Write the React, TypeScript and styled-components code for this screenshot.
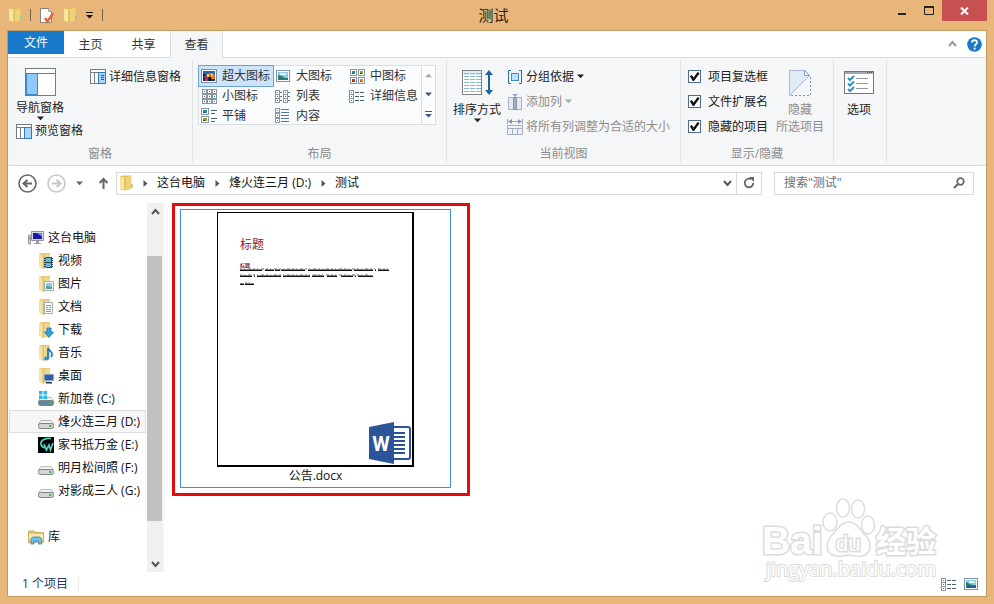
import React, { useState } from "react";
import styled, { createGlobalStyle, css } from "styled-components";

const Global = createGlobalStyle`
  *, *::before, *::after { box-sizing: border-box; }
  body { margin: 0; }
  body, button, input {
    font-family: "Open Sans", "Noto Sans CJK SC", sans-serif;
    font-size: 12px;
    line-height: 16px;
    color: #222;
  }
  button { border: 0; padding: 0; background: none; white-space: nowrap; }
  svg { display: block; flex: none; }
`;

const Window = styled.div`
  min-height: 100vh;
  display: flex;
  flex-direction: column;
  background: #e8b679;
`;

/* ---------- title bar ---------- */
const TitleBar = styled.header`
  display: grid;
  grid-template-columns: 1fr auto 1fr;
  height: 30px;
  padding-right: 7px;
`;
const QuickAccess = styled.div`
  display: flex;
  align-items: center;
  gap: 8px;
  padding-left: 8px;
`;
const QuickButton = styled.button`
  display: flex;
`;
const QuickDivider = styled.span`
  width: 1px;
  height: 12px;
  background: #76604a;
`;
const Title = styled.h1`
  margin: 0;
  font-size: 15px;
  font-weight: 400;
  line-height: 30px;
  color: #2b2116;
`;
const WindowButtons = styled.div`
  display: flex;
  justify-content: flex-end;
  align-items: flex-start;
`;
const WindowButton = styled.button<{ $close?: boolean }>`
  display: flex;
  align-items: center;
  justify-content: center;
  width: ${(p) => (p.$close ? 45 : 27)}px;
  height: 21px;
  background: ${(p) => (p.$close ? "#c75050" : "transparent")};
`;

/* ---------- client area ---------- */
const Client = styled.div`
  position: relative;
  flex: 1;
  display: flex;
  flex-direction: column;
  margin: 0 7px 7px;
  border: 1px solid #c49a63;
  background: #fff;
`;
const TabStrip = styled.nav`
  display: flex;
  height: 27px;
  border-bottom: 1px solid #dadbdc;
`;
const FileTab = styled.button`
  width: 56px;
  height: 23px;
  color: #fff;
  background: #1979ca;
`;
const Tab = styled.button<{ $active?: boolean }>`
  width: 53px;
  height: 27px;
  color: #333;
  ${(p) =>
    p.$active &&
    css`
      border: 1px solid #dadbdc;
      border-width: 0 1px;
      background: #f5f6f7;
    `}
`;
const TabTools = styled.div`
  display: flex;
  align-items: center;
  gap: 10px;
  margin-left: auto;
  padding-right: 4px;
`;
const IconButton = styled.button`
  display: flex;
  align-items: center;
  justify-content: center;
`;

/* ---------- ribbon ---------- */
const Ribbon = styled.div`
  display: flex;
  height: 108px;
  padding: 2px 0 3px;
  background: #f5f6f7;
  border-bottom: 1px solid #dadbdc;
`;
const Group = styled.section<{ $width: number }>`
  display: flex;
  flex-direction: column;
  width: ${(p) => p.$width}px;
  flex: none;
  border-right: 1px solid #e2e3e4;
`;
const GroupBody = styled.div<{ $inset?: number; $gap?: number }>`
  flex: 1;
  display: flex;
  align-items: flex-start;
  gap: ${(p) => p.$gap ?? 0}px;
  padding: 4px 0 0 ${(p) => p.$inset ?? 8}px;
`;
const GroupLabel = styled.h2`
  margin: 0;
  height: 16px;
  font-size: 12px;
  font-weight: 400;
  line-height: 16px;
  text-align: center;
  color: #8b8b8b;
`;
const Stack = styled.div<{ $gap?: number }>`
  display: flex;
  flex-direction: column;
  align-items: flex-start;
  gap: ${(p) => p.$gap ?? 0}px;
`;
const BigButton = styled.button`
  display: flex;
  flex-direction: column;
  align-items: center;
  line-height: 15px;
  color: #222;
  &:disabled { color: #8d8d8d; }
`;
const TwoLines = styled.span`
  display: flex;
  flex-direction: column;
  align-items: center;
  gap: 2px;
`;
const BigIcon = styled.span`
  display: flex;
  align-items: center;
  height: 38px;
`;
const SmallButton = styled.button<{ $tall?: boolean }>`
  display: flex;
  align-items: center;
  gap: 3px;
  height: ${(p) => (p.$tall ? 25 : 18)}px;
  color: #222;
  &:disabled { color: #8d8d8d; }
`;
const Gallery = styled.div`
  display: flex;
  height: 60px;
  margin-top: 1px;
  border: 1px solid #dcdde0;
  background: #fbfcfd;
`;
const GalleryItems = styled.div`
  display: grid;
  grid-template-columns: repeat(3, 74px);
  grid-auto-rows: 20px;
  height: 58px;
`;
const GalleryItem = styled.button<{ $selected?: boolean }>`
  display: flex;
  align-items: center;
  gap: 5px;
  padding-left: 2px;
  color: #333;
  ${(p) =>
    p.$selected &&
    css`
      background: #cde3fb;
      outline: 1px solid #6ba3d8;
      outline-offset: 0;
    `}
`;
const GalleryScroll = styled.div`
  display: grid;
  grid-template-rows: repeat(3, 1fr);
  width: 14px;
  border-left: 1px solid #dcdde0;
`;
const CheckLabel = styled.label`
  display: flex;
  align-items: center;
  gap: 7px;
  height: 25px;
  white-space: nowrap;
`;
const CheckBox = styled.input`
  appearance: none;
  width: 13px;
  height: 13px;
  margin: 0;
  border: 1px solid #4d6b93;
  background: #fff;
  &:checked::before {
    content: "";
    display: block;
    width: 11px;
    height: 11px;
    background: #111;
    clip-path: polygon(8% 48%, 26% 36%, 42% 58%, 78% 10%, 96% 20%, 46% 92%, 34% 92%);
  }
`;

/* ---------- address row ---------- */
const AddressRow = styled.div`
  display: flex;
  align-items: center;
  height: 37px;
  padding: 0 12px 3px 10px;
`;
const NavButtons = styled.div`
  display: flex;
  align-items: center;
  gap: 10px;
  width: 98px;
  padding-right: 7px;
  & > :last-child { margin-left: auto; }
`;
const AddressBox = styled.div`
  flex: 1;
  display: flex;
  height: 23px;
  border: 1px solid #d9d9d9;
`;
const Crumbs = styled.div`
  flex: 1;
  display: flex;
  align-items: center;
  padding-left: 2px;
`;
const Crumb = styled.a`
  color: #111;
  text-decoration: none;
  white-space: nowrap;
`;
const CrumbArrow = styled.span`
  width: 24px;
  display: flex;
  justify-content: center;
`;
const BoxButton = styled.button<{ $divided?: boolean }>`
  display: flex;
  align-items: center;
  justify-content: center;
  width: ${(p) => (p.$divided ? 25 : 18)}px;
  border-left: ${(p) => (p.$divided ? "1px solid #d9d9d9" : "0")};
`;
const SearchBox = styled.form`
  display: flex;
  width: 200px;
  height: 23px;
  margin-left: 12px;
  padding: 0 8px;
  border: 1px solid #d9d9d9;
`;
const SearchInput = styled.input`
  flex: 1;
  min-width: 0;
  border: 0;
  padding: 0 0 0 1px;
  outline: none;
  background: transparent;
  &::placeholder { color: #6d6d6d; opacity: 1; }
`;

/* ---------- body ---------- */
const Body = styled.div`
  flex: 1;
  display: flex;
`;
const NavPane = styled.aside`
  width: 139px;
  flex: none;
  padding: 23px 1px 0;
`;
const NavList = styled.ul`
  list-style: none;
  margin: 0;
  padding: 0 0 23px;
`;
const NavItem = styled.a<{ $root?: boolean; $current?: boolean }>`
  display: flex;
  align-items: center;
  gap: 4px;
  height: 23px;
  padding-left: ${(p) => (p.$root ? 19 : 29)}px;
  color: #111;
  text-decoration: none;
  white-space: nowrap;
  ${(p) =>
    p.$current &&
    css`
      background: #f7f7f7;
      box-shadow: inset 0 0 0 1px #dedede;
    `}
`;
const ScrollBar = styled.div`
  display: flex;
  flex-direction: column;
  width: 16px;
  flex: none;
  background: #f0f0f0;
`;
const ScrollButton = styled.button`
  display: flex;
  align-items: center;
  justify-content: center;
  height: 17px;
`;
const ScrollTrack = styled.div`
  flex: 1;
  display: grid;
  grid-template-rows: 36fr 265fr 34fr;
`;
const ScrollThumb = styled.div`
  grid-row: 2;
  width: 15px;
  background: #c1c1c1;
`;
const Files = styled.main`
  flex: 1;
  padding-left: 8px;
  border-left: 1px solid #f6f6f6;
`;
const Highlight = styled.div`
  width: 298px;
  height: 293px;
  padding: 3px 16px 5px 5px;
  border: 3px solid #e30b0b;
`;
const FileTile = styled.button`
  display: flex;
  flex-direction: column;
  align-items: center;
  gap: 1px;
  width: 100%;
  height: 279px;
  padding-top: 2px;
  border: 1px solid #3f8ddb;
  color: #111;
`;
const Page = styled.span`
  position: relative;
  display: block;
  width: 197px;
  height: 255px;
  padding: 24px 0 0 22px;
  border: 1px solid #000;
  border-width: 1px 2px 2px 1px;
  background: #fff;
  text-align: left;
  color: #8a2030;
`;
const PageHeading = styled.span<{ $small?: boolean }>`
  display: block;
  height: ${(p) => (p.$small ? 6 : 25)}px;
  font-size: ${(p) => (p.$small ? 5 : 12)}px;
  font-weight: ${(p) => (p.$small ? 700 : 400)};
  line-height: ${(p) => (p.$small ? 6 : 16)}px;
`;
const Badge = styled.span`
  position: absolute;
  right: 1px;
  bottom: 1px;
`;
const StatusBar = styled.footer`
  display: flex;
  align-items: center;
  height: 24px;
  padding: 0 8px 0 14px;
  color: #2a3a5c;
`;
const StatusCount = styled.span`
  padding-right: 10px;
  border-right: 1px solid #ececec;
`;
const StatusTools = styled.div`
  display: flex;
  gap: 7px;
  margin-left: auto;
`;
const Watermark = styled.svg`
  position: absolute;
  right: 40px;
  bottom: 12px;
  pointer-events: none;
`;

/* ---------- icons ---------- */
const Caret = ({ color = "#222", dir = "down" }: { color?: string; dir?: "down" | "up" | "right" }) => (
  <svg width="7" height="7" viewBox="0 0 7 7">
    <path fill={color} d={dir === "down" ? "M0 1.500h7L3.500 5.200z" : dir === "up" ? "M0 5.200h7L3.500 1.500z" : "M1.500 0v7L5.500 3.500z"} />
  </svg>
);
const Chevron = ({ up, color = "#555" }: { up?: boolean; color?: string }) => (
  <svg width="9" height="8" viewBox="0 0 9 8">
    <path fill="none" stroke={color} strokeWidth="2" d={up ? "M1 6l3.500-4L8 6" : "M1 2l3.500 4L8 2"} />
  </svg>
);
const FolderShape = () => (
  <>
    <path fill="#e3bd55" d="M1 1.500l2-1h9v13l-3 1.500H3l-2-1z" />
    <path fill="#f7e69b" d="M1 1.500l5 1v13l-5-2z" />
    <path fill="#eed477" d="M6 2.500L12.500 1v12.500L6 15.500z" />
    <path fill="#d2ab46" d="M5.500 2.500h1v13h-1z" />
  </>
);
const Folder = () => (
  <svg width="14" height="16" viewBox="0 0 14 16">
    <FolderShape />
    <path fill="#8fc6a0" d="M12 9h1.500v4H12z" />
  </svg>
);
const Properties = () => (
  <svg width="16" height="17" viewBox="0 0 16 17">
    <path fill="#fff" stroke="#8a8178" d="M1.500 1.500h8l3 3v11h-11z" />
    <path fill="#ddd" stroke="#8a8178" strokeWidth=".7" d="M9.500 1.500v3h3" />
    <path fill="none" stroke="#e0673a" strokeWidth="2.600" d="M6 11l2.500 3.500L14 6.500" />
  </svg>
);
const Pane = ({ w, h, kind }: { w: number; h: number; kind: "nav" | "preview" | "details" }) => {
  const top = kind === "nav" ? 5 : 3;
  return (
    <svg width={w} height={h} viewBox={`0 0 ${w} ${h}`} shapeRendering="crispEdges">
      <rect x=".5" y=".5" width={w - 1} height={h - 1} fill="#fff" stroke="#777c82" />
      <path stroke="#777c82" d={`M1 ${top + 0.5}h${w - 2}`} />
      {kind === "nav" ? (
        <rect x="1.500" y="5.500" width="11" height={h - 7} fill="#91c8fb" stroke="#3b86c8" />
      ) : (
        <>
          <path stroke="#777c82" d={`M4.500 ${top}v${h - top}`} />
          <rect x="8.500" y="3.500" width="7" height={h - 4} fill="#a9d4fb" stroke="#2d7cc0" />
          {kind === "details" && <path stroke="#23568a" d="M11 6.500h3M11 8.500h3M11 10.500h3" />}
        </>
      )}
    </svg>
  );
};
const Pic = ({ x = 0, y = 0, w = 6, h = 6, a = "#2f8f86", b = "#1e4d7a" }: any) => (
  <>
    <rect x={x + 0.5} y={y + 0.5} width={w - 1} height={h - 1} fill="#fff" stroke="#8796a6" />
    <rect x={x + 2} y={y + 2} width={w - 4} height={h - 4} fill={a} />
    <rect x={x + 2} y={y + h - 2 - Math.floor((h - 4) / 2)} width={Math.max(1, (w - 4) / 2)} height={Math.floor((h - 4) / 2)} fill={b} />
  </>
);
const Landscape = () => (
  <svg width="14" height="12" viewBox="0 0 14 12">
    <rect x=".5" y=".5" width="13" height="11" fill="#fff" stroke="#7d93ab" />
    <path fill="#8fc9e8" d="M2 2h10v8H2z" />
    <path fill="#e5f4fb" d="M5 3h6v2H5z" />
    <path fill="#2b7d6d" d="M2 4l4 2 3 1h3v3H2z" />
    <path fill="#1e5b94" d="M4 8h8v2H3z" />
  </svg>
);
const ViewIcon = ({ kind }: { kind: string }) => {
  const cols = ["#2f8f86", "#c04444", "#3d62b8"];
  return (
    <svg width="16" height="16" viewBox="0 0 16 16">
      {kind === "xl" && (
        <>
          <rect x=".5" y="1.500" width="15" height="13" fill="#fff" stroke="#7d93ab" />
          <path fill="#2a64b8" d="M2 3h12v10H2z" />
          <path fill="#15315e" d="M2 9h12v4H2z" />
          <path fill="#e8722c" d="M8 5h4l2 3v3H9z" />
          <path fill="#d42a2a" d="M4 8h3v5H4z" />
          <path fill="#f4d04a" d="M6 6h2v3H6zM10 6h2v2h-2z" />
          <path fill="#111" d="M8 9h2v4H8zM2 6h2v2H2z" />
        </>
      )}
      {kind === "l" && (
        <g transform="translate(1 2)">
          <rect x=".5" y=".5" width="13" height="11" fill="#fff" stroke="#7d93ab" />
          <path fill="#8fc9e8" d="M2 2h10v8H2z" />
          <path fill="#e5f4fb" d="M4 3h6v2H4z" />
          <path fill="#2b7d6d" d="M2 5l4 1 3 2h3v2H2z" />
        </g>
      )}
      {kind === "m" && (
        <>
          <Pic x={1} y={1} w={7} h={7} />
          <Pic x={9} y={1} w={7} h={7} a="#8aa12c" b="#222" />
          <Pic x={1} y={9} w={7} h={7} a="#c2392b" b="#25407c" />
          <Pic x={9} y={9} w={7} h={7} a="#e08a2e" b="#7a1c1c" />
        </>
      )}
      {kind === "s" &&
        [0, 1, 2].map((r) => [0, 1, 2].map((c) => <Pic key={r * 3 + c} x={1 + c * 5} y={1 + r * 5} w={5} h={5} a={cols[(r + c) % 3]} b={cols[(r + c) % 3]} />))}
      {kind === "list" &&
        [0, 1, 2].map((r) => (
          <g key={r}>
            <Pic x={0} y={2 + r * 4} w={5} h={5} a={cols[r]} b={cols[r]} />
            <Pic x={8} y={2 + r * 4} w={5} h={5} a={cols[r]} b={cols[r]} />
            <path stroke="#5b7591" d={`M5 ${4.5 + r * 4}h2M13 ${4.5 + r * 4}h2`} />
          </g>
        ))}
      {kind === "details" &&
        [0, 1, 2].map((r) => (
          <g key={r}>
            <Pic x={0} y={2 + r * 4} w={5} h={5} a={cols[r]} b={cols[r]} />
            <path stroke="#4a5f78" d={`M6 ${4.5 + r * 4}h4M11 ${4.5 + r * 4}h4`} />
          </g>
        ))}
      {kind === "tiles" && (
        <>
          <Pic x={0} y={0} w={8} h={7} />
          <Pic x={0} y={8} w={8} h={7} a="#8aa12c" b="#333" />
          <path stroke="#4a5f78" d="M10 2.500h6M10 5.500h4M10 10.500h6M10 13.500h4" />
        </>
      )}
      {kind === "content" && (
        <>
          {[0, 1, 2].map((r) => <Pic key={r} x={0} y={r * 5} w={5} h={5} a={cols[r]} b={cols[r]} />)}
          <path stroke="#4a78a8" d="M6 1.500h8M6 4.500h8M6 7.500h8M6 10.500h8M6 13.500h8" />
        </>
      )}
    </svg>
  );
};
const SortIcon = () => (
  <svg width="32" height="28" viewBox="0 0 32 28">
    <rect x="1.500" y="1.500" width="19" height="24" fill="#fff" stroke="#7d8288" />
    <path fill="#e1f0f8" d="M2 2h18v4H2z" />
    <path stroke="#8cb4c8" strokeDasharray="5 1" d="M3 4.500h17M3 7.500h17M3 10.500h17M3 13.500h17M3 16.500h17M3 19.500h17M3 22.500h17" />
    <path stroke="#1f6497" strokeWidth="2" d="M28 4v19" />
    <path fill="#1f6497" d="M28 1l4 5h-8zM28 26l4-5h-8z" />
  </svg>
);
const GroupIcon = () => (
  <svg width="16" height="16" viewBox="0 0 16 16">
    <path fill="none" stroke="#2a6d9e" d="M4 1.500H1.500v13H4M12 1.500h2.500v13H12" />
    <rect x="4.500" y="4.500" width="7" height="7" fill="#b9e0fa" stroke="#3d8fc9" />
  </svg>
);
const AddColumnIcon = () => (
  <svg width="16" height="16" viewBox="0 0 16 16">
    <path fill="#e6eaf2" stroke="#a5afc4" d="M1.500 3.500h13v12h-13z" />
    <path fill="#a3aec6" stroke="#8894b0" d="M6.500 3.500h3v12h-3z" />
    <path fill="#9aa5bd" d="M5 0h6L8 3z" />
  </svg>
);
const FitColumnsIcon = () => (
  <svg width="16" height="16" viewBox="0 0 16 16">
    <path stroke="#98a5c0" d="M.5 0v5M15.500 0v5M2 2.500h12" />
    <path fill="#8895b5" d="M1 2.500L5 0v5zM15 2.500L11 0v5z" />
    <path fill="#eef1f6" stroke="#a5afc4" d="M.5 6.500h15v9H.5zM.5 9.500h15M5.500 9v6M10.500 9v6" />
  </svg>
);
const HideIcon = () => (
  <svg width="24" height="28" viewBox="0 0 24 28">
    <path fill="#e1eaf7" d="M1 1h16l5 5L1 27z" />
    <path fill="none" stroke="#a9b9d6" d="M1.500 27V1.500h16M1 27L22 6" />
    <path fill="#f6f8fc" stroke="#8c9fc4" d="M16.500 1.500v5h5z" />
    <path fill="none" stroke="#7d90b8" strokeDasharray="2 2" d="M22.500 8v18.500H2" />
  </svg>
);
const OptionsIcon = () => (
  <svg width="30" height="24" viewBox="0 0 30 24">
    <rect x=".5" y=".5" width="29" height="22" fill="#fff" stroke="#777" />
    <path fill="#a4a9ae" d="M1 1h28v2H1z" />
    <path stroke="#555" strokeDasharray="1 1" d="M23 1.500h5" />
    <path fill="none" stroke="#2f94c4" strokeWidth="2" d="M4 7l2 2 4-4M4 12.500l2 2 4-4M4 18l2 2 4-4" />
    <path stroke="#8f9aa4" d="M12 7.500h12M12 12.500h12M12 17.500h12" />
  </svg>
);
const CircleArrow = ({ flip, color }: { flip?: boolean; color: string }) => (
  <svg width="19" height="19" viewBox="0 0 19 19">
    <circle cx="9.500" cy="9.500" r="8.500" fill="none" stroke={color} strokeWidth="1.600" />
    <path fill="none" stroke={color} strokeWidth="2" d={flip ? "M5 9.500h8M9.500 6l4 3.500-4 3.500" : "M14 9.500H6M9.500 6l-4 3.500 4 3.500"} />
  </svg>
);
const NavIcon = ({ kind }: { kind: string }) => (
  <svg width="16" height="16" viewBox="0 0 16 16">
    {["video", "image", "doc", "down", "music", "desk"].includes(kind) && (
      <>
        <path fill="#e7c873" d="M1 1l2-1h9v14l-7 1z" />
        <path fill="#f5e3a2" d="M1 1l4 1v14l-4-2z" />
        <path fill="#efd88c" d="M5 2l7-1v13l-7 2z" />
        <path stroke="#c9a94f" strokeWidth=".8" d="M5.200 2v13.500" />
      </>
    )}
    {kind === "video" && (
      <>
        <path fill="#34454f" d="M6 4h9v11H6z" />
        <path fill="#6db5d8" d="M8 5h5v4H8zM8 10h5v4H8z" />
        <path stroke="#fff" strokeDasharray="1 1" d="M7 4v11M14.500 4v11" />
      </>
    )}
    {kind === "image" && (
      <>
        <path fill="#fff" stroke="#a3adb5" d="M6.500 5.500h9v9h-9z" />
        <path fill="#8fcbe0" d="M8 7h6v6H8z" />
        <path fill="#4e9c92" d="M8 10l6 1v2H8z" />
      </>
    )}
    {kind === "doc" && (
      <>
        <path fill="#fff" stroke="#a3adb5" d="M6.500 3.500h8v11h-8z" />
        <path stroke="#6d9cc8" d="M8 6.500h5M8 8.500h2M11 8.500h2M8 10.500h5M8 12.500h5" />
      </>
    )}
    {kind === "down" && <path fill="#35a0dc" stroke="#1b6ea8" strokeWidth=".8" d="M9 6h4v4h2.500L11 15.500 6.500 10H9z" />}
    {kind === "music" && (
      <>
        <path fill="none" stroke="#2377ad" strokeWidth="1.800" d="M10 13V3c1 3 4 3 4 6 0 2-1 3-1 3" />
        <ellipse cx="8.500" cy="13.500" rx="2.500" ry="2" fill="#2c90c9" />
      </>
    )}
    {kind === "desk" && (
      <>
        <path fill="#2f5fa8" stroke="#8da4c0" d="M6.500 6.500h9v6h-9z" />
        <path fill="#234" d="M8 14h6v1.500H8z" />
      </>
    )}
    {kind === "pc" && (
      <>
        <path fill="#d7d9de" stroke="#8f959c" d="M3.500 1.500h12v9h-12z" />
        <path fill="#1419a8" d="M5 3h9v6H5z" />
        <path fill="#5f86ee" d="M9 3h5v4z" />
        <path fill="#9aa0a6" d="M8 11h3v2h2v1H6v-1h2z" />
        <path fill="#cfd3d6" stroke="#868c90" strokeWidth=".8" d="M.5 5h2v9h-2z" />
        <path fill="#43b04a" d="M1 7h1v2H1z" />
      </>
    )}
    {(kind === "disk" || kind === "win") && (
      <>
        <path fill="#f1f2f3" stroke="#a5a9ad" strokeWidth=".8" d="M3 6.500h10l2.500 3.500H.5z" />
        <rect x=".5" y="9.500" width="15" height="5" rx="2" fill={kind === "win" ? "#5f8798" : "#d3d5d8"} stroke="#7e8387" />
        <path fill="#48c04b" d="M11 11h2.500v2H11z" />
      </>
    )}
    {kind === "win" && <path fill="#25b7ea" d="M1 0h3.500v3.500H1zM5.500 0H9v3.500H5.500zM1 4.500h3.500V8H1zM5.500 4.500H9V8H5.500z" />}
    {kind === "game" && (
      <>
        <path d="M0 0h16v16H0z" />
        <path fill="none" stroke="#4fd0c4" strokeWidth="1.700" d="M13 1.500C7 1 2 3 3 7.500c.5 2 2 3 4.500 3.500M6 7l2.500 6L11 8l1.500 5L15 6" />
      </>
    )}
    {kind === "lib" && (
      <>
        <path fill="#e3c467" stroke="#bb9b45" strokeWidth=".7" d="M.5 2h6l1 1.500h8v10H.5z" />
        <path fill="#f8ebad" d="M1 5h14v6H1z" />
        <path fill="#6cc0ea" stroke="#2f86bb" strokeWidth=".8" d="M3 15V9.500L5 8h6.500l2 1.500V15h-3v-3H6v3z" />
      </>
    )}
  </svg>
);
const WordIcon = () => (
  <svg width="42" height="42" viewBox="0 0 42 42">
    <rect x="22" y="5" width="19" height="32" rx="2" fill="#fff" stroke="#2a5699" strokeWidth="2" />
    <path stroke="#2a5699" strokeWidth="2" d="M24 11h12M24 15h12M24 19h12M24 23h12M24 27h12M24 31h12" />
    <path fill="#2a5699" d="M0 5l25-5v42L0 37z" />
    <text x="12" y="29" textAnchor="middle" fill="#fff" fontFamily="Roboto, sans-serif" fontWeight="700" fontSize="20">W</text>
  </svg>
);

/* ---------- data ---------- */
const views = [
  ["xl", "超大图标"], ["l", "大图标"], ["m", "中图标"],
  ["s", "小图标"], ["list", "列表"], ["details", "详细信息"],
  ["tiles", "平铺"], ["content", "内容"],
];
const places = [
  ["video", "视频"], ["image", "图片"], ["doc", "文档"], ["down", "下载"],
  ["music", "音乐"], ["desk", "桌面"], ["win", "新加卷 (C:)"], ["disk", "烽火连三月 (D:)"],
  ["game", "家书抵万金 (E:)"], ["disk", "明月松间照 (F:)"], ["disk", "对影成三人 (G:)"],
];
const crumbs = ["这台电脑", "烽火连三月 (D:)", "测试"];

const NavPaneButton = styled(BigButton)`
  height: 58px;
`;
const ColumnTools = styled(Stack)`
  margin-left: 6px;
`;
const HideSlot = styled.div`
  margin-left: 8px;
`;

export default function App() {
  const [view, setView] = useState("xl");
  return (
    <>
      <Global />
      <Window>
        <TitleBar>
          <QuickAccess>
            <Folder />
            <QuickDivider />
            <QuickButton aria-label="属性"><Properties /></QuickButton>
            <QuickButton aria-label="新建文件夹"><Folder /></QuickButton>
            <QuickButton aria-label="自定义快速访问工具栏">
              <svg width="9" height="8" viewBox="0 0 9 8"><path fill="#111" d="M1 1h7v1H1zM1 4h7L4.500 7.500z" /></svg>
            </QuickButton>
            <QuickDivider />
          </QuickAccess>
          <Title>测试</Title>
          <WindowButtons>
            <WindowButton aria-label="最小化">
              <svg width="10" height="10" viewBox="0 0 10 10"><path fill="#222" d="M1 7h8v2H1z" /></svg>
            </WindowButton>
            <WindowButton aria-label="最大化">
              <svg width="10" height="9" viewBox="0 0 10 9"><path fill="none" stroke="#222" d="M.5 1v7.500h9V1" /><path fill="#222" d="M0 0h10v2H0z" /></svg>
            </WindowButton>
            <WindowButton $close aria-label="关闭">
              <svg width="9" height="8" viewBox="0 0 9 8"><path stroke="#fff" strokeWidth="2" d="M1 .5l7 7M8 .5l-7 7" /></svg>
            </WindowButton>
          </WindowButtons>
        </TitleBar>

        <Client>
          <TabStrip>
            <FileTab>文件</FileTab>
            <Tab>主页</Tab>
            <Tab>共享</Tab>
            <Tab $active>查看</Tab>
            <TabTools>
              <IconButton aria-label="最小化功能区"><Chevron up color="#999" /></IconButton>
              <IconButton aria-label="帮助">
                <svg width="15" height="15" viewBox="0 0 15 15">
                  <circle cx="7.500" cy="7.500" r="7.300" fill="#1979ca" />
                  <path fill="none" stroke="#fff" strokeWidth="1.800" d="M5 5.500c0-3 5-3 5 0 0 1.700-2.400 1.800-2.400 4" />
                  <path fill="#fff" d="M6.700 10.700h1.900v1.900H6.700z" />
                </svg>
              </IconButton>
            </TabTools>
          </TabStrip>

          <Ribbon>
            <Group $width={185}>
              <GroupBody $gap={7}>
                <Stack>
                  <NavPaneButton>
                    <BigIcon><Pane w={31} h={28} kind="nav" /></BigIcon>
                    导航窗格
                    <Caret />
                  </NavPaneButton>
                  <SmallButton><Pane w={16} h={15} kind="preview" />预览窗格</SmallButton>
                </Stack>
                <SmallButton $tall><Pane w={16} h={15} kind="details" />详细信息窗格</SmallButton>
              </GroupBody>
              <GroupLabel>窗格</GroupLabel>
            </Group>

            <Group $width={254}>
              <GroupBody $inset={5}>
                <Gallery>
                  <GalleryItems>
                    {views.map(([id, name]) => (
                      <GalleryItem key={id} $selected={view === id} onClick={() => setView(id)}>
                        <ViewIcon kind={id} />
                        {name}
                      </GalleryItem>
                    ))}
                  </GalleryItems>
                  <GalleryScroll>
                    <IconButton aria-label="上一行"><Caret dir="up" color="#aaa" /></IconButton>
                    <IconButton aria-label="下一行"><Caret color="#44587c" /></IconButton>
                    <IconButton aria-label="更多">
                      <svg width="7" height="7" viewBox="0 0 7 7"><path fill="#44587c" d="M0 0h7v1H0zM0 3h7L3.500 6.500z" /></svg>
                    </IconButton>
                  </GalleryScroll>
                </Gallery>
              </GroupBody>
              <GroupLabel>布局</GroupLabel>
            </Group>

            <Group $width={234}>
              <GroupBody $inset={6}>
                <BigButton>
                  <BigIcon><SortIcon /></BigIcon>
                  排序方式
                  <Caret />
                </BigButton>
                <ColumnTools>
                  <SmallButton $tall><GroupIcon />分组依据 <Caret /></SmallButton>
                  <SmallButton $tall disabled><AddColumnIcon />添加列 <Caret color="#aaa" /></SmallButton>
                  <SmallButton $tall disabled><FitColumnsIcon />将所有列调整为合适的大小</SmallButton>
                </ColumnTools>
              </GroupBody>
              <GroupLabel>当前视图</GroupLabel>
            </Group>

            <Group $width={153}>
              <GroupBody $inset={7}>
                <Stack>
                  {["项目复选框", "文件扩展名", "隐藏的项目"].map((t) => (
                    <CheckLabel key={t}>
                      <CheckBox type="checkbox" defaultChecked />
                      {t}
                    </CheckLabel>
                  ))}
                </Stack>
                <HideSlot>
                  <BigButton disabled>
                    <BigIcon><HideIcon /></BigIcon>
                    <TwoLines>
                      <span>隐藏</span>
                      <span>所选项目</span>
                    </TwoLines>
                  </BigButton>
                </HideSlot>
              </GroupBody>
              <GroupLabel>显示/隐藏</GroupLabel>
            </Group>

            <Group $width={53}>
              <GroupBody $inset={10}>
                <BigButton>
                  <BigIcon><OptionsIcon /></BigIcon>
                  选项
                </BigButton>
              </GroupBody>
            </Group>
          </Ribbon>

          <AddressRow>
            <NavButtons>
              <IconButton aria-label="后退"><CircleArrow color="#666" /></IconButton>
              <IconButton aria-label="前进"><CircleArrow flip color="#c6c6c6" /></IconButton>
              <IconButton aria-label="最近浏览的位置"><Caret color="#666" /></IconButton>
              <IconButton aria-label="上移">
                <svg width="11" height="13" viewBox="0 0 11 13"><path fill="none" stroke="#666" strokeWidth="2" d="M5.500 12V2M1.500 6l4-4 4 4" /></svg>
              </IconButton>
            </NavButtons>
            <AddressBox>
              <Crumbs>
                <Folder />
                {crumbs.map((c) => (
                  <React.Fragment key={c}>
                    <CrumbArrow><Caret dir="right" color="#555" /></CrumbArrow>
                    <Crumb href="#">{c}</Crumb>
                  </React.Fragment>
                ))}
              </Crumbs>
              <BoxButton aria-label="历史记录"><Chevron /></BoxButton>
              <BoxButton $divided aria-label="刷新">
                <svg width="12" height="12" viewBox="0 0 12 12">
                  <path fill="none" stroke="#666" strokeWidth="1.800" d="M8 2.200A4.300 4.300 0 1 0 10.300 6" />
                  <path fill="#666" d="M6 0h5v5z" />
                </svg>
              </BoxButton>
            </AddressBox>
            <SearchBox onSubmit={(e) => e.preventDefault()}>
              <SearchInput aria-label="搜索" placeholder={'搜索"测试"'} />
              <IconButton aria-label="搜索">
                <svg width="12" height="12" viewBox="0 0 12 12">
                  <circle cx="7.500" cy="4.500" r="3.300" fill="none" stroke="#666" strokeWidth="1.700" />
                  <path stroke="#666" strokeWidth="2.200" d="M5 7L1 11" />
                </svg>
              </IconButton>
            </SearchBox>
          </AddressRow>

          <Body>
            <NavPane>
              <NavList>
                <li><NavItem href="#" $root><NavIcon kind="pc" />这台电脑</NavItem></li>
                {places.map(([icon, name]) => (
                  <li key={name}>
                    <NavItem href="#" $current={name.includes("(D:)")}><NavIcon kind={icon} />{name}</NavItem>
                  </li>
                ))}
              </NavList>
              <NavItem href="#" $root><NavIcon kind="lib" />库</NavItem>
            </NavPane>
            <ScrollBar>
              <ScrollButton aria-label="向上滚动"><Chevron up /></ScrollButton>
              <ScrollTrack><ScrollThumb /></ScrollTrack>
              <ScrollButton aria-label="向下滚动"><Chevron /></ScrollButton>
            </ScrollBar>
            <Files>
              <Highlight>
                <FileTile>
                  <Page>
                    <PageHeading>标题</PageHeading>
                    <PageHeading $small>标题</PageHeading>
                    <svg width="152" height="22" viewBox="0 0 152 22">
                      <g fill="none" stroke="#111" strokeWidth="1.600">
                        <path strokeDasharray="22 3 9 1 5 1 24 3 44 2 19 2 1 2 14 1" d="M0 2.200h149" />
                        <path strokeDasharray="12 2 1 2 24 2 27 2 12 3 10 4" d="M0 8.200h133" />
                        <path strokeDasharray="4 1 9 1" d="M0 16.200h15" />
                      </g>
                      <path stroke="#666" strokeDasharray="2 2 1 3 3 2" d="M0 1h148M0 7h130M5 15h8" />
                    </svg>
                    <Badge><WordIcon /></Badge>
                  </Page>
                  公告.docx
                </FileTile>
              </Highlight>
            </Files>
          </Body>

          <StatusBar>
            <StatusCount>1 个项目</StatusCount>
            <StatusTools>
              <IconButton aria-label="详细信息视图"><ViewIcon kind="details" /></IconButton>
              <IconButton aria-label="大缩略图视图"><Landscape /></IconButton>
            </StatusTools>
          </StatusBar>

          <Watermark width="184" height="90" viewBox="0 0 184 90">
            <g fill="#fff" stroke="#dcdcdc" strokeWidth="1.500">
              <ellipse cx="68" cy="28" rx="7" ry="9" />
              <ellipse cx="81" cy="14" rx="6.500" ry="9" />
              <ellipse cx="96" cy="15" rx="6.500" ry="9" />
              <ellipse cx="106" cy="31" rx="6.500" ry="9" />
              <path d="M87 28c8 0 11 8 16 13 6 5 9 19-4 21-5 1-8-1-12-1s-8 2-13 1c-12-2-10-15-4-21 5-5 9-13 17-13z" />
              <g strokeWidth="3" paintOrder="stroke" fontFamily="Liberation Sans, Noto Sans CJK SC, sans-serif" fontWeight="700">
                <text x="0" y="60" fontSize="39">Bai</text>
                <text x="74" y="57" fontSize="22" fontWeight="400">du</text>
                <text x="114" y="58" fontSize="30" fontFamily="Noto Sans CJK SC, sans-serif">经验</text>
              </g>
              <text x="4" y="82" fontSize="20" strokeWidth="2" paintOrder="stroke" fontFamily="Open Sans, sans-serif">jingyan.baidu.com</text>
            </g>
          </Watermark>
        </Client>
      </Window>
    </>
  );
}
